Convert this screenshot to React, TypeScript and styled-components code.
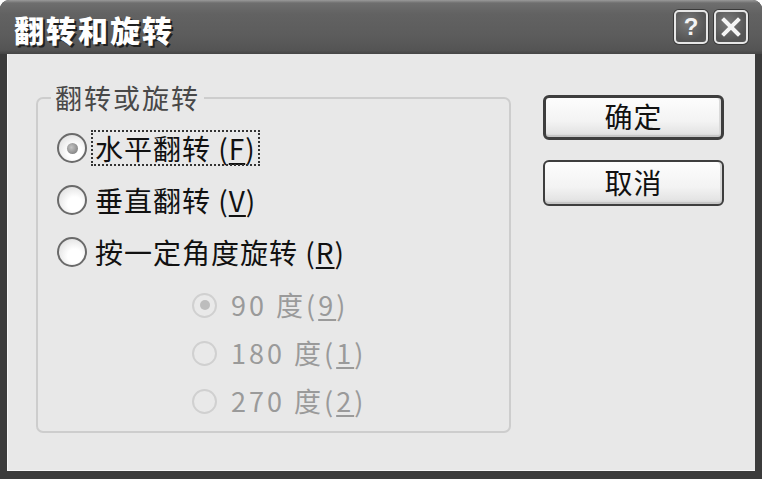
import styled, { createGlobalStyle } from 'styled-components';

const GlobalStyle = createGlobalStyle`
  html, body {
    margin: 0;
    padding: 0;
    background: #ffffff;
  }
  body {
    font-family: "Noto Sans CJK SC", "Noto Sans", sans-serif;
  }
`;

const Window = styled.div`
  width: 762px;
  height: 479px;
  display: flex;
  flex-direction: column;
  background: #3b3b3b;
  border-radius: 9px 9px 0 0;
  overflow: hidden;
`;

const TitleBar = styled.div`
  height: 54px;
  flex: none;
  display: flex;
  align-items: center;
  padding: 4px 14px 0 14px;
  box-sizing: border-box;
  background: linear-gradient(
    #9a9a9a 0,
    #6e6e6e 3px,
    #626262 14px,
    #5c5c5c 36px,
    #545454 50px,
    #454545 54px
  );
`;

const Title = styled.div`
  flex: 1;
  color: #ffffff;
  font-size: 30px;
  font-weight: 900;
  letter-spacing: 2px;
  line-height: 34px;
  text-shadow: 2px 2px 0 #202020;
`;

const CaptionButtons = styled.div`
  display: flex;
  gap: 6px;
  margin-top: -4px;
`;

const CaptionButton = styled.div`
  width: 34px;
  height: 34px;
  box-sizing: border-box;
  border: 2px solid #e6e6e6;
  border-radius: 5px;
  background: radial-gradient(circle at 40% 35%, #7a7a7a, #555555 70%);
  display: flex;
  align-items: center;
  justify-content: center;
  color: #f4f4f4;
  font-family: "Liberation Sans", Arial, sans-serif;
  font-weight: 700;
  font-size: 24px;
  box-shadow: 0 0 0 1px #3a3a3a;
`;

const Client = styled.div`
  flex: 1;
  display: flex;
  align-items: flex-start;
  gap: 32px;
  margin: 0 7px 8px 7px;
  padding: 28px 0 0 29px;
  background: #e8e8e8;
  box-shadow: inset 1px 0 #f6f6f6, inset 0 -1px #f6f6f6;
`;

const GroupBox = styled.fieldset`
  width: 475px;
  height: 351px;
  box-sizing: border-box;
  margin: 0;
  padding: 0;
  border: 2px solid #cdcdcd;
  border-radius: 7px;
`;

const GroupLegend = styled.legend`
  margin-left: 13px;
  padding: 0 4px;
  font-size: 27px;
  line-height: 32px;
  letter-spacing: 2px;
  color: #484848;
`;

const Options = styled.div`
  display: flex;
  flex-direction: column;
  padding: 8px 0 0 19px;
`;

const OptionRow = styled.div<{ $sub?: boolean; $first?: boolean }>`
  display: flex;
  align-items: center;
  height: ${(p) => (p.$sub ? 48 : 52)}px;
  padding-left: ${(p) => (p.$sub ? 135 : 0)}px;
  margin-top: ${(p) => (p.$first ? 3 : 0)}px;
  gap: ${(p) => (p.$sub ? 12 : 6)}px;
`;

const RadioCircle = styled.span<{ $size: number; $checked?: boolean; $disabled?: boolean }>`
  flex: none;
  width: ${(p) => p.$size}px;
  height: ${(p) => p.$size}px;
  box-sizing: border-box;
  border-radius: 50%;
  border: 2px solid ${(p) => (p.$disabled ? '#d0d0d0' : '#6a6a6a')};
  background: ${(p) =>
    p.$disabled
      ? '#e9e9e9'
      : 'radial-gradient(circle at 60% 65%, #ffffff 30%, #e2e2e2 80%, #cfcfcf)'};
  display: flex;
  align-items: center;
  justify-content: center;

  &::after {
    content: '';
    display: ${(p) => (p.$checked ? 'block' : 'none')};
    width: ${(p) => Math.round(p.$size * 0.38)}px;
    height: ${(p) => Math.round(p.$size * 0.38)}px;
    border-radius: 50%;
    background: ${(p) =>
      p.$disabled
        ? '#bdbdbd'
        : 'radial-gradient(circle at 40% 40%, #c4c4c4, #8a8a8a 70%)'};
  }
`;

const OptionLabel = styled.span<{ $disabled?: boolean; $focused?: boolean }>`
  font-size: ${(p) => (p.$disabled ? 27 : 28)}px;
  line-height: 32px;
  letter-spacing: ${(p) => (p.$disabled ? 3 : 1)}px;
  color: ${(p) => (p.$disabled ? '#9a9a9a' : '#111111')};
  padding: 0 2px;
  outline: ${(p) => (p.$focused ? '2px dotted #333333' : 'none')};
  outline-offset: 0;
  white-space: pre;

  u {
    text-decoration-thickness: 2px;
    text-underline-offset: 3px;
  }
`;

const ButtonColumn = styled.div`
  display: flex;
  flex-direction: column;
  gap: 20px;
  margin-top: 13px;
`;

const PushButton = styled.button<{ $default?: boolean }>`
  width: 181px;
  height: ${(p) => (p.$default ? 45 : 46)}px;
  box-sizing: border-box;
  border: ${(p) => (p.$default ? '3px' : '2px')} solid #3e3e3e;
  border-radius: 6px;
  background: linear-gradient(#fdfdfd, #f3f3f3 60%, #e4e4e4 90%, #cfcfcf);
  box-shadow: inset 0 -2px 0 #c6c6c6, inset -2px 0 0 #dadada;
  font-family: "Noto Sans CJK SC", sans-serif;
  font-size: 28px;
  line-height: 32px;
  letter-spacing: 1px;
  color: #111111;
  padding: 0 0 3px 0;
`;

const options = [
  { label: '水平翻转 ', key: 'F', checked: true, focused: true },
  { label: '垂直翻转 ', key: 'V' },
  { label: '按一定角度旋转 ', key: 'R' },
];

const angles = [
  { label: '90 度', key: '9', checked: true },
  { label: '180 度', key: '1' },
  { label: '270 度', key: '2' },
];

const CloseGlyph = () => (
  <svg width="20" height="20" viewBox="0 0 20 20">
    <path d="M3 3 L17 17 M17 3 L3 17" stroke="#f4f4f4" strokeWidth="4" strokeLinecap="square" />
  </svg>
);

export default function App() {
  return (
    <>
      <GlobalStyle />
      <Window>
        <TitleBar>
          <Title>翻转和旋转</Title>
          <CaptionButtons>
            <CaptionButton>?</CaptionButton>
            <CaptionButton>
              <CloseGlyph />
            </CaptionButton>
          </CaptionButtons>
        </TitleBar>
        <Client>
          <GroupBox>
            <GroupLegend>翻转或旋转</GroupLegend>
            <Options>
              {options.map((o) => (
                <OptionRow key={o.key}>
                  <RadioCircle $size={30} $checked={o.checked} />
                  <OptionLabel $focused={o.focused}>
                    {o.label}(<u>{o.key}</u>)
                  </OptionLabel>
                </OptionRow>
              ))}
              {angles.map((a, i) => (
                <OptionRow key={a.key} $sub $first={i === 0}>
                  <RadioCircle $size={25} $checked={a.checked} $disabled />
                  <OptionLabel $disabled>
                    {a.label}(<u>{a.key}</u>)
                  </OptionLabel>
                </OptionRow>
              ))}
            </Options>
          </GroupBox>
          <ButtonColumn>
            <PushButton $default>确定</PushButton>
            <PushButton>取消</PushButton>
          </ButtonColumn>
        </Client>
      </Window>
    </>
  );
}
